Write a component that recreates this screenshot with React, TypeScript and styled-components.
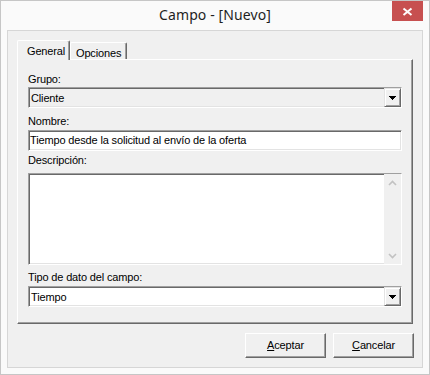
import React from "react";
import styled, { createGlobalStyle, css } from "styled-components";

const GlobalStyle = createGlobalStyle`
  html, body { margin: 0; padding: 0; background: #ffffff; }
  body { font-family: "Liberation Sans", Arial, sans-serif; font-size: 11px; color: #000; letter-spacing: -0.15px; }
  * { box-sizing: border-box; }
`;

const Window = styled.div`
  width: 430px;
  height: 375px;
  border: 1px solid #c6c6c6;
  background: #fafafa;
  padding: 0 6px 6px;
  display: flex;
  flex-direction: column;
`;

const TitleBar = styled.div`
  height: 29px;
  flex: none;
  display: grid;
  grid-template-columns: 1fr auto 1fr;
  align-items: start;
`;

const Title = styled.div`
  grid-column: 2;
  margin-top: 4px;
  font-family: "Noto Sans", "Open Sans", sans-serif;
  font-size: 14px;
  line-height: 20px;
  letter-spacing: 0.1px;
  color: #1e1e1e;
  white-space: nowrap;
`;

const CloseButton = styled.div`
  grid-column: 3;
  justify-self: end;
  width: 31px;
  height: 20px;
  background: #c75050;
  display: flex;
`;

const Client = styled.div`
  flex: 1;
  border: 1px solid #d6d6d6;
  background: #f0f0f0;
  padding: 9px;
  display: flex;
  flex-direction: column;
`;

const TabStrip = styled.div`
  height: 19px;
  flex: none;
  display: flex;
  align-items: flex-end;
  position: relative;
  z-index: 1;
`;

const Tab = styled.div<{ $active?: boolean; $width: number; $pad: number }>`
  width: ${(p) => p.$width}px;
  height: ${(p) => (p.$active ? 20 : 17)}px;
  margin-bottom: ${(p) => (p.$active ? -1 : 0)}px;
  background: #f0f0f0;
  border-top: 1px solid #ffffff;
  border-left: 1px solid #ffffff;
  border-right: 1px solid #696969;
  box-shadow: inset -1px 0 #a0a0a0;
  border-top-left-radius: 2px;
  border-top-right-radius: 2px;
  padding: 4px 0 0 ${(p) => p.$pad}px;
  line-height: 13px;
  white-space: nowrap;
`;

const Panel = styled.div`
  height: 265px;
  flex: none;
  border-top: 1px solid #ffffff;
  border-left: 1px solid #ffffff;
  border-right: 1px solid #696969;
  border-bottom: 1px solid #696969;
  box-shadow: inset -1px -1px #a0a0a0;
  padding: 13px 10px 0 10px;
  display: flex;
  flex-direction: column;
`;

const Label = styled.div<{ $mt: number }>`
  margin-top: ${(p) => p.$mt}px;
  line-height: 13px;
  height: 13px;
  white-space: nowrap;
`;

const sunken = css`
  border: 1px solid;
  border-color: #a0a0a0 #ffffff #ffffff #a0a0a0;
  box-shadow: inset 1px 1px #696969, inset -1px -1px #e3e3e3;
`;

const Combo = styled.div<{ $mt: number; $bg: string }>`
  ${sunken};
  margin-top: ${(p) => p.$mt}px;
  height: 21px;
  flex: none;
  background: ${(p) => p.$bg};
  display: flex;
`;

const ComboText = styled.div`
  flex: 1;
  padding: 4px 0 0 2px;
  line-height: 13px;
  white-space: nowrap;
`;

const raised = css`
  border: 1px solid;
  border-color: #e3e3e3 #696969 #696969 #e3e3e3;
  box-shadow: inset 1px 1px #ffffff, inset -1px -1px #a0a0a0;
`;

const DropButton = styled.div`
  ${raised};
  width: 17px;
  flex: none;
  background: #f0f0f0;
  display: flex;
  align-items: center;
  justify-content: center;
`;

const TextInput = styled.div<{ $mt: number }>`
  ${sunken};
  margin-top: ${(p) => p.$mt}px;
  height: 21px;
  flex: none;
  background: #ffffff;
  padding: 3px 0 0 1px;
  line-height: 13px;
  white-space: nowrap;
`;

const TextArea = styled.div<{ $mt: number }>`
  ${sunken};
  margin-top: ${(p) => p.$mt}px;
  height: 92px;
  flex: none;
  background: #ffffff;
  display: flex;
`;

const TextAreaBody = styled.div`
  flex: 1;
`;

const ScrollBar = styled.div`
  width: 17px;
  flex: none;
  background: #f0f0f0;
  display: flex;
  flex-direction: column;
  justify-content: space-between;
`;

const ScrollArrow = styled.div`
  width: 17px;
  height: 17px;
  display: flex;
  align-items: center;
  justify-content: center;
`;

const ButtonRow = styled.div`
  margin-top: 9px;
  margin-right: -1px;
  display: flex;
  justify-content: flex-end;
  gap: 7px;
`;

const Button = styled.div`
  width: 81px;
  height: 25px;
  border: 1px solid;
  border-color: #ffffff #696969 #696969 #ffffff;
  box-shadow: inset -1px -1px #a0a0a0;
  background: #f0f0f0;
  text-align: center;
  line-height: 23px;
`;

const Triangle = () => (
  <svg width="7" height="4" viewBox="0 0 7 4" shapeRendering="crispEdges">
    <path d="M0 0h7v1H0z M1 1h5v1H1z M2 2h3v1H2z M3 3h1v1H3z" fill="#000" />
  </svg>
);

const Chevron = ({ up }: { up?: boolean }) => (
  <svg width="9" height="6" viewBox="0 0 9 6">
    <path
      d={up ? "M1 5 L4.5 1.5 L8 5" : "M1 1 L4.5 4.5 L8 1"}
      fill="none"
      stroke="#c2c2c2"
      strokeWidth="1.6"
    />
  </svg>
);

export default function App() {
  return (
    <>
      <GlobalStyle />
      <Window>
        <TitleBar>
          <Title>Campo - [Nuevo]</Title>
          <CloseButton>
            <svg width="31" height="20" viewBox="0 0 31 20">
              <path d="M11.5 7.5 L19.5 14 M19.5 7.5 L11.5 14" stroke="#ffffff" strokeWidth="2" />
            </svg>
          </CloseButton>
        </TitleBar>
        <Client>
          <TabStrip>
            <Tab $active $width={53} $pad={9}>General</Tab>
            <Tab $width={57} $pad={5}>Opciones</Tab>
          </TabStrip>
          <Panel>
            <Label $mt={0}>Grupo:</Label>
            <Combo $mt={1} $bg="#f0f0f0">
              <ComboText>Cliente</ComboText>
              <DropButton>
                <Triangle />
              </DropButton>
            </Combo>
            <Label $mt={7}>Nombre:</Label>
            <TextInput $mt={2}>Tiempo desde la solicitud al envío de la oferta</TextInput>
            <Label $mt={3}>Descripción:</Label>
            <TextArea $mt={6}>
              <TextAreaBody />
              <ScrollBar>
                <ScrollArrow>
                  <Chevron up />
                </ScrollArrow>
                <ScrollArrow>
                  <Chevron />
                </ScrollArrow>
              </ScrollBar>
            </TextArea>
            <Label $mt={6}>Tipo de dato del campo:</Label>
            <Combo $mt={2} $bg="#ffffff">
              <ComboText>Tiempo</ComboText>
              <DropButton>
                <Triangle />
              </DropButton>
            </Combo>
          </Panel>
          <ButtonRow>
            <Button>
              <u>A</u>ceptar
            </Button>
            <Button>
              <u>C</u>ancelar
            </Button>
          </ButtonRow>
        </Client>
      </Window>
    </>
  );
}
